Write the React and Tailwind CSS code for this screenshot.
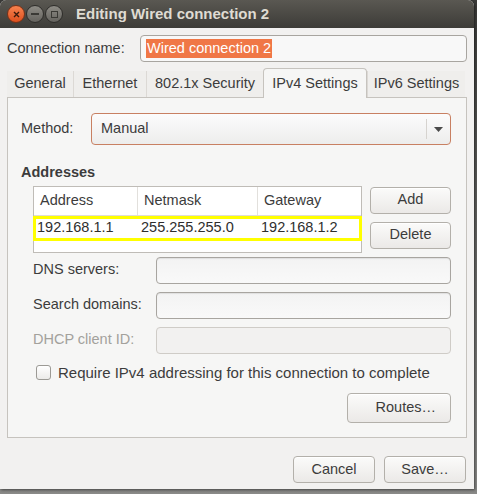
import { useState } from 'react';

const font = { fontFamily: '"Liberation Sans", Arial, sans-serif' };

function Btn({ children, className = '' }) {
  return (
    <div
      className={`flex h-[27px] items-center justify-center rounded-[4px] border border-[#b3b0aa] bg-gradient-to-b from-[#fbfbfa] to-[#ebe9e7] text-[14.5px] text-[#3c3c3c] shadow-[inset_0_1px_0_#ffffff] ${className}`}
    >
      {children}
    </div>
  );
}

function Field({ disabled = false }) {
  return (
    <div
      className={`h-[27px] flex-1 rounded-[4px] border ${
        disabled
          ? 'border-[#cfccc7] bg-[#f2f1f0]'
          : 'border-[#a8a5a0] bg-gradient-to-b from-[#f3f3f3] to-[#f9f9f9] shadow-[inset_0_1px_1px_rgba(0,0,0,0.08)]'
      }`}
    />
  );
}

export default function App() {
  const [required, setRequired] = useState(false);
  const tabs = [
    { label: 'General', w: 'w-[66px]' },
    { label: 'Ethernet', w: 'w-[73px]' },
    { label: '802.1x Security', w: 'w-[117px]' },
    { label: 'IPv4 Settings', w: 'w-[104px]', active: true },
    { label: 'IPv6 Settings', w: 'w-[98px]' }
  ];

  return (
    <div className="relative h-[494px] w-[477px] overflow-hidden bg-gradient-to-b from-[#3a3a38] via-[#666664] to-[#8a8a88]" style={font}>
      <div className="flex h-[489px] w-[474px] flex-col overflow-hidden rounded-t-[6px] bg-[#f2f1f0] shadow-[1px_1px_3px_rgba(0,0,0,0.5)]">
        {/* title bar */}
        <div className="flex h-[28px] shrink-0 items-center bg-gradient-to-b from-[#5a5852] to-[#3d3c38] pl-[7px]">
          <div className="flex h-[18px] w-[18px] items-center justify-center rounded-full border border-[#7a3218] bg-gradient-to-b from-[#f6824e] to-[#de4f1c]">
            <svg width="7" height="7" viewBox="0 0 7 7">
              <path d="M1 1L6 6M6 1L1 6" stroke="#3c1a0c" strokeWidth="1.4" />
            </svg>
          </div>
          <div className="ml-[1px] flex h-[18px] w-[18px] items-center justify-center rounded-full border border-[#2f2e2b] bg-gradient-to-b from-[#8e8c86] to-[#65635e]">
            <div className="h-[1.5px] w-[8px] bg-[#3a3935]" />
          </div>
          <div className="ml-[1px] flex h-[18px] w-[18px] items-center justify-center rounded-full border border-[#2f2e2b] bg-gradient-to-b from-[#8e8c86] to-[#65635e]">
            <div className="h-[7px] w-[7px] border-[1.5px] border-[#3a3935]" />
          </div>
          <div className="ml-[13px] text-[15px] font-bold text-[#dfdbd2]">Editing Wired connection 2</div>
        </div>

        {/* body */}
        <div className="flex flex-1 flex-col px-[7px]">
          <div className="mt-[7px] flex h-[27px] items-center">
            <div className="w-[133px] text-[14.5px] text-[#3c3c3c]">Connection name:</div>
            <div className="flex h-[27px] flex-1 items-center rounded-[4px] border border-[#a8a5a0] bg-[#f8f8f8] pl-[5px]">
              <span className="bg-[#f07746] px-[1px] text-[14.5px] leading-[19px] text-white">Wired connection 2</span>
            </div>
          </div>

          {/* tabs */}
          <div className="mt-[7px] flex h-[28px] items-end">
            {tabs.map((t) =>
              t.active ? (
                <div
                  key={t.label}
                  className={`${t.w} relative z-10 -mb-px flex h-[30px] items-center justify-center rounded-t-[4px] border border-b-0 border-[#c6c3be] bg-[#f6f6f5] text-[14.5px] text-[#3c3c3c]`}
                >
                  {t.label}
                </div>
              ) : (
                <div
                  key={t.label}
                  className={`${t.w} flex h-[26px] items-center justify-center border-l border-[#dcd9d5] bg-[#efeeec] text-[14.5px] text-[#3c3c3c] first:border-l-0`}
                >
                  {t.label}
                </div>
              )
            )}
          </div>

          {/* panel */}
          <div className="flex h-[341px] flex-col border border-[#c6c3be] bg-[#f6f6f5] pl-[13px] pr-[15px]">
            <div className="mt-[15px] flex h-[32px] items-center">
              <div className="w-[70px] text-[14.5px] text-[#3c3c3c]">Method:</div>
              <div className="flex h-[32px] flex-1 items-center rounded-[4px] border border-[#c88062] bg-gradient-to-b from-[#fcfcfc] to-[#ededec] pl-[9px]">
                <span className="flex-1 text-[14.5px] text-[#3c3c3c]">Manual</span>
                <div className="h-[20px] w-px bg-[#d6d3cf]" />
                <div className="flex w-[23px] justify-center">
                  <svg width="9" height="5" viewBox="0 0 9 5">
                    <path d="M0 0H9L4.5 5Z" fill="#4a4a4a" />
                  </svg>
                </div>
              </div>
            </div>

            <div className="mt-[17px] text-[14.5px] font-bold text-[#3c3c3c]">Addresses</div>

            <div className="mt-[2px] flex pl-[12px]">
              <div className="h-[67px] w-[329px] border border-[#bfbcb7] bg-white">
                <div className="flex h-[29px] border-b border-[#dedcd8] text-[14.5px] text-[#3c3c3c]">
                  <div className="flex w-[103px] items-center pl-[6px]">Address</div>
                  <div className="flex w-[120px] items-center border-l border-[#e2e0dc] pl-[6px]">Netmask</div>
                  <div className="flex flex-1 items-center border-l border-[#e2e0dc] pl-[6px]">Gateway</div>
                </div>
                <div className="-ml-px flex h-[25px] w-[329px] border-[3px] border-solid border-[#ffff00] text-[14.5px] text-[#2e2e2e]">
                  <div className="flex w-[101px] items-center pl-[1px]">192.168.1.1</div>
                  <div className="flex w-[120px] items-center pl-[4px]">255.255.255.0</div>
                  <div className="flex flex-1 items-center pl-[4px]">192.168.1.2</div>
                </div>
              </div>
              <div className="ml-[8px] flex flex-1 flex-col gap-[8px] pt-[1px]">
                <Btn>Add</Btn>
                <Btn>Delete</Btn>
              </div>
            </div>

            <div className="mt-[4px] flex flex-col gap-[8px] pl-[12px]">
              {[
                { label: 'DNS servers:' },
                { label: 'Search domains:' },
                { label: 'DHCP client ID:', disabled: true }
              ].map((r) => (
                <div key={r.label} className="flex h-[27px] items-center">
                  <div className={`w-[123px] text-[14.5px] ${r.disabled ? 'text-[#a3a19c]' : 'text-[#3c3c3c]'}`}>{r.label}</div>
                  <Field disabled={r.disabled} />
                </div>
              ))}
            </div>

            <label className="mt-[10px] flex h-[18px] items-center pl-[15px]" onClick={() => setRequired(!required)}>
              <div className="flex h-[15px] w-[15px] items-center justify-center rounded-[3px] border border-[#9c9a95] bg-gradient-to-b from-[#ffffff] to-[#ecebe9]">
                {required ? (
                  <svg width="10" height="10" viewBox="0 0 10 10">
                    <path d="M1.5 5L4 7.5L8.5 2" stroke="#3c3c3c" strokeWidth="1.6" fill="none" />
                  </svg>
                ) : null}
              </div>
              <span className="ml-[7px] text-[15px] text-[#3c3c3c]">Require IPv4 addressing for this connection to complete</span>
            </label>

            <div className="mt-[11px] flex justify-end">
              <Btn className="h-[30px] w-[104px] justify-end pr-[14px]">Routes…</Btn>
            </div>
          </div>

          <div className="mt-[18px] flex justify-end gap-[9px] pr-[1px]">
            <Btn className="w-[82px]">Cancel</Btn>
            <Btn className="w-[82px]">Save…</Btn>
          </div>
        </div>
      </div>
    </div>
  );
}
